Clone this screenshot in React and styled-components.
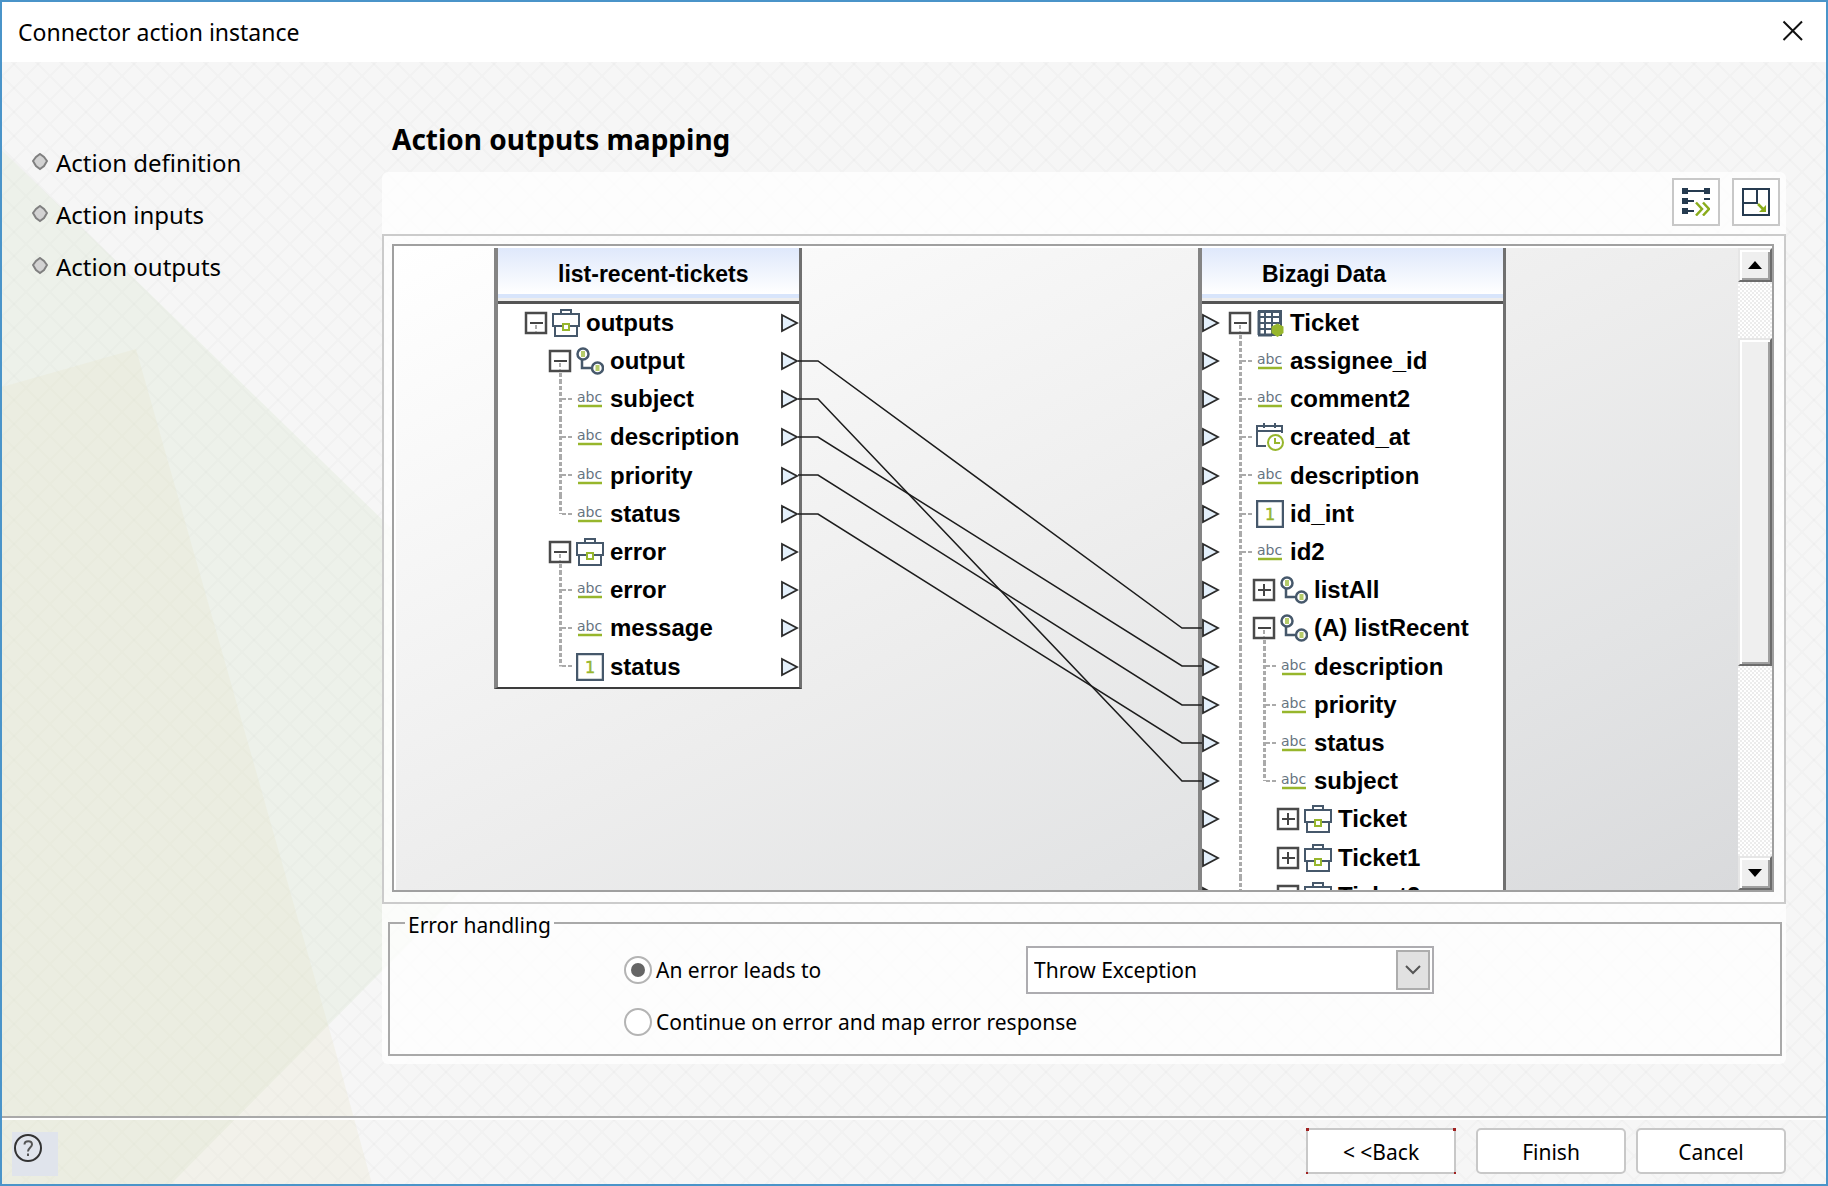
import { useState } from 'react';
import styled, { createGlobalStyle, css } from 'styled-components';

const GlobalStyle = createGlobalStyle`
    * {
        box-sizing: border-box;
    }

    body {
        margin: 0;
        font-family: "Noto Sans", "Open Sans", sans-serif;
        font-size: 21px;
        color: #000;
    }
`

const Window = styled.div`
    display: flex;
    flex-direction: column;

    height: 100vh;
    min-height: 700px;

    border: 2px solid #4a94c9;
    background-color: #f6f6f6;
`

const TitleBar = styled.header`
    display: flex;
    align-items: center;
    justify-content: space-between;

    flex: none;
    height: 60px;
    padding: 0 22px 2px 16px;

    background-color: #fff;
`

const Title = styled.h1`
    margin: 0;
    padding-top: 2px;
    font-size: 23px;
    font-weight: 400;
`

const PlainButton = styled.button`
    display: grid;
    place-items: center;

    padding: 0;
    border: 0;
    background: none;
`

const Backdrop = styled.div`
    position: relative;

    display: flex;
    flex-direction: column;
    flex: 1;
    min-height: 0;

    background-image:
        linear-gradient(45deg, transparent 47%, rgba(0, 0, 0, .015) 47%, rgba(0, 0, 0, .015) 53%, transparent 53%),
        linear-gradient(135deg, transparent 47%, rgba(0, 0, 0, .015) 47%, rgba(0, 0, 0, .015) 53%, transparent 53%);
    background-size: 24px 24px;
    background-position: 0 -10px;

    overflow: hidden;
`

const BackdropShapes = styled.svg`
    position: absolute;
    top: 0;
    left: 0;
    pointer-events: none;
`

const Body = styled.div`
    position: relative;

    display: grid;
    grid-template-columns: 380px minmax(0, 1fr);

    flex: 1;
    min-height: 0;
    padding: 0 40px 52px 0;
`

const Steps = styled.ol`
    margin: 0;
    padding: 74px 0 0 30px;
    list-style: none;
    font-size: 24px;
`

const Step = styled.li`
    display: flex;
    align-items: center;
    gap: 8px;
    height: 52px;
`

const Main = styled.main`
    display: flex;
    flex-direction: column;
    min-height: 0;
`

const Heading = styled.h2`
    margin: 0;
    padding: 57px 0 13px 10px;
    font-size: 28px;
    line-height: 40px;
    font-weight: 700;
`

const Panel = styled.section`
    display: flex;
    flex-direction: column;
    flex: 1;
    min-height: 0;

    border-radius: 6px;
    background-color: rgba(255, 255, 255, .75);
`

const Toolbar = styled.div`
    display: flex;
    justify-content: flex-end;
    gap: 12px;

    padding: 6px 6px 8px;
`

const ToolButton = styled(PlainButton)`
    width: 48px;
    height: 48px;
    border: 2px solid #c8c8c8;
    background-color: #fff;
`

const MapFrame = styled.div`
    display: flex;
    flex: 1;
    min-height: 0;

    padding: 8px 10px 10px 8px;
    border: 2px solid #cbcbcb;
`

const MapView = styled.div`
    display: flex;
    flex: 1;
    min-width: 0;

    padding: 2px 0 0 2px;
    border: 2px solid #a0a0a0;
    background-color: #fff;
`

const Diagram = styled.div`
    display: grid;
    grid-template-columns: 308px 396px 308px;
    align-items: start;

    flex: 1;
    min-width: 0;
    padding-left: 98px;

    background-image: linear-gradient(to bottom right, #fff, #f6f6f6 25%, #ededed 50%, #e3e4e5 75%, #d9dadc);

    overflow: hidden;
`

const Wires = styled.svg`
    width: 100%;
    height: 620px;
    overflow: visible;
    z-index: 1;

    fill: none;
    stroke: #1c1c1c;
    stroke-width: 1.5;
`

const Node = styled.section`
    border: solid #707070;
    border-width: 0 3px 2px 4px;
    border-left-color: #848484;
    border-bottom-color: #3c3c3c;
    background-color: #fff;
`

const NodeTitle = styled.h3`
    height: 56px;
    margin: 0;
    padding: 0 2px 0 60px;

    font: 700 23px/52px "Liberation Sans", sans-serif;

    border-bottom: 3px solid #555;
    background-image: linear-gradient(#dfe8fb, #fff 46px, #d8e5fb 46px, #d8e5fb 50px, #eee 50px);
`

const Tree = styled.ul`
    display: grid;
    grid-auto-rows: 38px 38px 38px 38px 39px;

    margin: 0;
    padding: 0 0 1px;
    list-style: none;

    font: 700 24px/36px "Liberation Sans", sans-serif;
`

const Row = styled.li`
    display: flex;
    align-items: center;
`

const RowLabel = styled.span`
    flex: 1;
    padding-left: 6px;
    white-space: nowrap;
`

const RowPad = styled.span`
    width: ${(props) => props.$width};
`

const dashV = 'repeating-linear-gradient(to bottom, #aaa 0 4px, transparent 4px 6px)';
const dashH = 'repeating-linear-gradient(to right, #aaa 0 4px, transparent 4px 6px)';

const guides = {
    line: css`
        background: ${dashV} 11px 0 / 3px 100% no-repeat;
    `,
    tee: css`
        background: ${dashV} 11px 0 / 3px 100% no-repeat, ${dashH} 14px 18px / 11px 2px no-repeat;
    `,
    elbow: css`
        background: ${dashV} 11px 0 / 3px 50% no-repeat, ${dashH} 14px 18px / 11px 2px no-repeat;
    `,
    open: css`
        background: ${dashV} 11px 100% / 3px 50% no-repeat;
    `,
};

const Cell = styled.span`
    display: flex;
    align-items: center;
    align-self: stretch;
    flex: none;

    width: ${(props) => (props.$slot ? '28px' : '24px')};

    ${(props) => guides[props.$guide]}
`

const ScrollBar = styled.div`
    display: flex;
    flex-direction: column;
    flex: none;

    width: 34px;
    background: repeating-conic-gradient(#ececec 0 25%, #fff 0 50%) 0 0 / 4px 4px;
`

const raised = css`
    border: 2px solid;
    border-color: #e6e6e6 #6c6c6c #6c6c6c #e6e6e6;
    background-color: #efefef;
    box-shadow: inset 2px 2px #fff, inset -2px -2px #a0a0a0;
`

const ScrollButton = styled(PlainButton)`
    flex: none;
    height: 34px;
    ${raised}
`

const ScrollTrack = styled.div`
    display: grid;
    grid-template-rows: 56fr 328fr 190fr;
    flex: 1;
`

const ScrollThumb = styled.div`
    grid-row: 2;
    ${raised}
`

const ErrorBox = styled.fieldset`
    display: grid;
    grid-template-columns: 402px 408px;
    grid-auto-rows: 48px;
    row-gap: 4px;
    align-items: center;

    flex: none;
    min-width: 0;
    margin: 3px 4px 8px 6px;
    padding: 7px 0 8px 234px;
    border: 2px solid #a9a9a9;
`

const Legend = styled.legend`
    margin-left: -219px;
    padding: 4px 3px 0;
    line-height: 28px;
`

const Choice = styled.label`
    display: flex;
    align-items: center;
    gap: 4px;
    white-space: nowrap;
`

const Radio = styled.input`
    appearance: none;

    display: grid;
    place-items: center;
    flex: none;

    width: 28px;
    height: 28px;
    margin: 0;
    border: 2px solid #b4b4b4;
    border-radius: 50%;
    background-color: #fff;

    &:checked::before {
        content: '';
        width: 14px;
        height: 14px;
        border-radius: 50%;
        background-color: #666;
    }
`

const SelectBox = styled.span`
    position: relative;
    display: flex;
`

const Select = styled.select`
    appearance: none;

    width: 100%;
    height: 48px;
    padding: 0 40px 0 6px;
    border: 2px solid #adacb0;
    border-radius: 0;

    font: inherit;
    color: #000;
    background-color: #fff;
`

const SelectArrow = styled.span`
    position: absolute;
    top: 4px;
    right: 4px;
    bottom: 4px;

    display: grid;
    place-items: center;

    width: 34px;
    border: 2px solid #adadad;
    background-color: #e1e1e1;
    pointer-events: none;
`

const Footer = styled.footer`
    position: relative;

    display: flex;
    align-items: flex-start;
    justify-content: space-between;

    flex: none;
    height: 68px;
    padding: 8px 40px 0 10px;
    border-top: 2px solid #a9a9a9;
    box-shadow: inset 0 2px #fff;
`

const HelpButton = styled(PlainButton)`
    place-items: start;

    width: 46px;
    height: 44px;
    margin-top: 6px;
    padding: 2px;
    background-color: #e0e4ec;
`

const Actions = styled.div`
    display: flex;
    gap: 10px;
    padding-top: 2px;
`

const ActionButton = styled.button`
    width: 150px;
    height: 46px;
    padding: 2px 0 0;
    margin-left: ${(props) => (props.$apart ? '10px' : '0')};

    font: inherit;
    color: #000;

    border: 2px solid #c8c8c8;
    border-radius: ${(props) => (props.$focus ? '0' : '5px')};
    background-color: #fff;

    ${(props) => props.$focus && css`
        background:
            linear-gradient(#a02020, #a02020) 0 0 / 3px 3px,
            linear-gradient(#a02020, #a02020) 100% 0 / 3px 3px,
            linear-gradient(#a02020, #a02020) 0 100% / 2px 2px,
            linear-gradient(#a02020, #a02020) 100% 100% / 2px 2px,
            linear-gradient(#fff, #fff) 2px 2px / 146px 42px,
            #c8c8c8;
        background-repeat: no-repeat;
        background-origin: border-box;
        border-color: transparent;
    `}
`

const navy = '#46586b';
const lime = '#97b62c';

const Bullet = () => (
    <svg width="16" height="18" viewBox="0 0 16 18" aria-hidden="true">
        <path d="M8 1 12 4 15 8 12 13 8 16 4 13 1 8 4 4Z" fill="#d2d2d2" stroke="#808080" strokeWidth="2" />
    </svg>
);

const Toggle = ({ open }) => (
    <svg width="24" height="24" viewBox="0 0 24 24" aria-hidden="true">
        <rect x="2" y="2" width="20" height="20" fill="#fff" stroke="#4a4a4a" strokeWidth="2.500" />
        <path d={open ? 'M6 12h13' : 'M6 12h13M12 6v12'} stroke="#444" strokeWidth="2" />
        {open && <path d="M12 14v7" stroke="#aaa" strokeWidth="2" strokeDasharray="4 2" />}
    </svg>
);

const Port = () => (
    <svg width="18" height="20" viewBox="0 0 18 20" aria-hidden="true">
        <path d="M1 2 16 10 1 18Z" fill="#e4f0fb" stroke="#2a2a2a" strokeWidth="1.800" />
    </svg>
);

const icons = {
    case: (
        <g fill="none" stroke={navy} strokeWidth="2">
            <path d="M9 4V1h10v3" />
            <path d="M3 17v10h22V17" fill="#fff" />
            <path d="M1 5h26v12H1Z" fill="#fff" />
            <rect x="11" y="15" width="6" height="6" fill="#fff" stroke={lime} />
        </g>
    ),
    relation: (
        <g fill="none" stroke={navy} strokeWidth="2.500">
            <path d="M6 12v9h9" />
            <circle cx="7" cy="7" r="5.500" fill="#fff" />
            <circle cx="21.500" cy="21" r="5.500" fill="#fff" />
            <path d="M7 4v6M21.500 18v6" stroke={lime} strokeOpacity=".7" strokeWidth="4" />
        </g>
    ),
    text: (
        <g>
            <text x="1" y="17" fontFamily="DejaVu Sans, sans-serif" fontWeight="400" fontSize="14" fill="#66747f">abc</text>
            <path d="M2 21h24" stroke={lime} strokeWidth="2.500" />
        </g>
    ),
    number: (
        <g>
            <rect x="1" y="1" width="26" height="26" fill="#fff" stroke={navy} strokeWidth="2.500" />
            <text x="14" y="20" textAnchor="middle" fontFamily="DejaVu Sans, sans-serif" fontWeight="400" fontSize="16" fill={lime} stroke={lime} strokeWidth=".5">1</text>
        </g>
    ),
    date: (
        <g fill="none" stroke={navy} strokeWidth="2">
            <path d="M10 23H1V3h25v7M1 8h25M8 0v5M19 0v5" />
            <circle cx="19.500" cy="19.500" r="7.500" fill="#fff" stroke={lime} />
            <path d="M19 15v5h5" stroke={lime} />
        </g>
    ),
    entity: (
        <g fill="none" stroke={navy} strokeWidth="2">
            <path d="M3 2h22v24H3Z" fill="#fff" />
            <path d="M3 3h22M3 8h22M3 14h22M3 20h12M9 2v24M16 2v24M24 2v12" />
            <path d="M3 2v24M2 26h14" strokeWidth="3" />
            <path d="M21.500 14.500 27.500 17.500V24L21.500 28 15.500 24V17.500Z" fill={lime} stroke="none" />
        </g>
    ),
};

const RowIcon = ({ name }) => (
    <svg width="28" height="28" viewBox="0 0 28 28" aria-hidden="true">{icons[name]}</svg>
);

// guides: one entry per level, the last one is the slot in front of the icon
const sourceRows = [
    { label: 'outputs', icon: 'case', guides: ['none'], toggle: 'open' },
    { label: 'output', icon: 'relation', guides: ['none', 'open'], toggle: 'open' },
    { label: 'subject', icon: 'text', guides: ['none', 'tee'] },
    { label: 'description', icon: 'text', guides: ['none', 'tee'] },
    { label: 'priority', icon: 'text', guides: ['none', 'tee'] },
    { label: 'status', icon: 'text', guides: ['none', 'elbow'] },
    { label: 'error', icon: 'case', guides: ['none', 'open'], toggle: 'open' },
    { label: 'error', icon: 'text', guides: ['none', 'tee'] },
    { label: 'message', icon: 'text', guides: ['none', 'tee'] },
    { label: 'status', icon: 'number', guides: ['none', 'elbow'] },
];

const targetRows = [
    { label: 'Ticket', icon: 'entity', guides: ['open'], toggle: 'open' },
    { label: 'assignee_id', icon: 'text', guides: ['tee'] },
    { label: 'comment2', icon: 'text', guides: ['tee'] },
    { label: 'created_at', icon: 'date', guides: ['tee'] },
    { label: 'description', icon: 'text', guides: ['tee'] },
    { label: 'id_int', icon: 'number', guides: ['tee'] },
    { label: 'id2', icon: 'text', guides: ['tee'] },
    { label: 'listAll', icon: 'relation', guides: ['line', 'none'], toggle: 'closed' },
    { label: '(A) listRecent', icon: 'relation', guides: ['line', 'open'], toggle: 'open' },
    { label: 'description', icon: 'text', guides: ['line', 'tee'] },
    { label: 'priority', icon: 'text', guides: ['line', 'tee'] },
    { label: 'status', icon: 'text', guides: ['line', 'tee'] },
    { label: 'subject', icon: 'text', guides: ['line', 'elbow'] },
    { label: 'Ticket', icon: 'case', guides: ['line', 'none', 'none'], toggle: 'closed' },
    { label: 'Ticket1', icon: 'case', guides: ['line', 'none', 'none'], toggle: 'closed' },
    { label: 'Ticket2', icon: 'case', guides: ['line', 'none', 'none'], toggle: 'closed' },
];

// [source row, target row]
const links = [[1, 8], [2, 12], [3, 9], [4, 10], [5, 11]];

const rowCenter = (index) => 56 + 19 + index * 38 + Math.floor(index / 5);

const TreeNode = ({ title, rows, portSide }) => (
    <Node>
        <NodeTitle>{title}</NodeTitle>
        <Tree>
            {rows.map(({ label, icon, guides: cells, toggle }, index) => (
                <Row key={label + index}>
                    {portSide === 'left' && <Port />}
                    <RowPad $width={portSide === 'left' ? '8px' : '26px'} />
                    {cells.map((guide, level) => {
                        const last = level === cells.length - 1;
                        return (
                            <Cell key={level} $guide={guide} $slot={last}>
                                {last && toggle && <Toggle open={toggle === 'open'} />}
                            </Cell>
                        );
                    })}
                    <RowIcon name={icon} />
                    <RowLabel>{label}</RowLabel>
                    {portSide === 'right' && <Port />}
                </Row>
            ))}
        </Tree>
    </Node>
);

const App = () => {
    const [onError, setOnError] = useState('throw');

    return (
        <>
            <GlobalStyle />
            <Window>
                <TitleBar>
                    <Title>Connector action instance</Title>
                    <PlainButton type="button" aria-label="Close">
                        <svg width="22" height="22" viewBox="0 0 22 22">
                            <path d="M1.500 1.500 20 20M20 1.500 1.500 20" stroke="#111" strokeWidth="2" />
                        </svg>
                    </PlainButton>
                </TitleBar>
                <Backdrop>
                    <BackdropShapes width="620" height="1122" viewBox="0 0 620 1122" aria-hidden="true">
                        <path d="M0 88 608 679 169 1122H0Z" fill="rgba(206, 224, 192, .2)" />
                        <path d="M0 325 134 287 336 998 370 1122H0Z" fill="rgba(228, 226, 190, .2)" />
                    </BackdropShapes>
                    <Body>
                        <Steps>
                            <Step><Bullet />Action definition</Step>
                            <Step><Bullet />Action inputs</Step>
                            <Step><Bullet />Action outputs</Step>
                        </Steps>
                        <Main>
                            <Heading>Action outputs mapping</Heading>
                            <Panel>
                                <Toolbar>
                                    <ToolButton type="button" aria-label="Map automatically">
                                        <svg width="28" height="28" viewBox="0 0 28 28">
                                            <path d="M0 0h6v6H0ZM22 0h6v6h-6ZM0 10h6v6H0ZM0 20h6v6H0Z" fill="#263b50" />
                                            <path d="M6 3h16M6 13h6M6 23h6M22 11h6" stroke="#263b50" strokeWidth="2" />
                                            <path d="M14 14.500 20 21 14 27.500M21 14.500 27 21 21 27.500" fill="none" stroke="#8aac1c" strokeWidth="2.500" />
                                        </svg>
                                    </ToolButton>
                                    <ToolButton type="button" aria-label="Expand view">
                                        <svg width="28" height="28" viewBox="0 0 28 28">
                                            <path d="M1 1h26v26H1ZM15 1v14H1" fill="none" stroke="#263b50" strokeWidth="2" />
                                            <path d="M16 16 21 21" stroke="#8aac1c" strokeWidth="2.500" />
                                            <path d="M24 17v7h-7Z" fill="#8aac1c" />
                                        </svg>
                                    </ToolButton>
                                </Toolbar>
                                <MapFrame>
                                    <MapView>
                                        <Diagram>
                                            <TreeNode title="list-recent-tickets" rows={sourceRows} portSide="right" />
                                            <Wires aria-hidden="true">
                                                {links.map(([from, to]) => (
                                                    <polyline
                                                        key={from}
                                                        points={`-4,${rowCenter(from)} 16,${rowCenter(from)} 380,${rowCenter(to)} 400,${rowCenter(to)}`}
                                                    />
                                                ))}
                                            </Wires>
                                            <TreeNode title="Bizagi Data" rows={targetRows} portSide="left" />
                                        </Diagram>
                                        <ScrollBar>
                                            <ScrollButton type="button" aria-label="Scroll up">
                                                <svg width="14" height="8" viewBox="0 0 14 8"><path d="M7 0 14 8H0Z" /></svg>
                                            </ScrollButton>
                                            <ScrollTrack>
                                                <ScrollThumb />
                                            </ScrollTrack>
                                            <ScrollButton type="button" aria-label="Scroll down">
                                                <svg width="14" height="8" viewBox="0 0 14 8"><path d="M0 0H14L7 8Z" /></svg>
                                            </ScrollButton>
                                        </ScrollBar>
                                    </MapView>
                                </MapFrame>
                                <ErrorBox>
                                    <Legend>Error handling</Legend>
                                    <Choice>
                                        <Radio
                                            type="radio"
                                            name="onError"
                                            checked={onError === 'throw'}
                                            onChange={() => setOnError('throw')}
                                        />
                                        An error leads to
                                    </Choice>
                                    <SelectBox>
                                        <Select aria-label="Error result">
                                            <option>Throw Exception</option>
                                        </Select>
                                        <SelectArrow>
                                            <svg width="16" height="10" viewBox="0 0 16 10">
                                                <path d="M1 1 8 8 15 1" fill="none" stroke="#555" strokeWidth="2" />
                                            </svg>
                                        </SelectArrow>
                                    </SelectBox>
                                    <Choice>
                                        <Radio
                                            type="radio"
                                            name="onError"
                                            checked={onError === 'continue'}
                                            onChange={() => setOnError('continue')}
                                        />
                                        Continue on error and map error response
                                    </Choice>
                                </ErrorBox>
                            </Panel>
                        </Main>
                    </Body>
                    <Footer>
                        <HelpButton type="button" aria-label="Help">
                            <svg width="28" height="28" viewBox="0 0 28 28">
                                <circle cx="14" cy="14" r="13" fill="none" stroke="#333" strokeWidth="2" />
                                <path d="M10.500 10.500C10.500 6 18 6 18 10.500 18 13.500 14 13.500 14 17.500M14 19.500v2.500" fill="none" stroke="#555" strokeWidth="2" />
                            </svg>
                        </HelpButton>
                        <Actions>
                            <ActionButton type="button" $focus>{'< <Back'}</ActionButton>
                            <ActionButton type="button" $apart>Finish</ActionButton>
                            <ActionButton type="button">Cancel</ActionButton>
                        </Actions>
                    </Footer>
                </Backdrop>
            </Window>
        </>
    );
};

export default App;
